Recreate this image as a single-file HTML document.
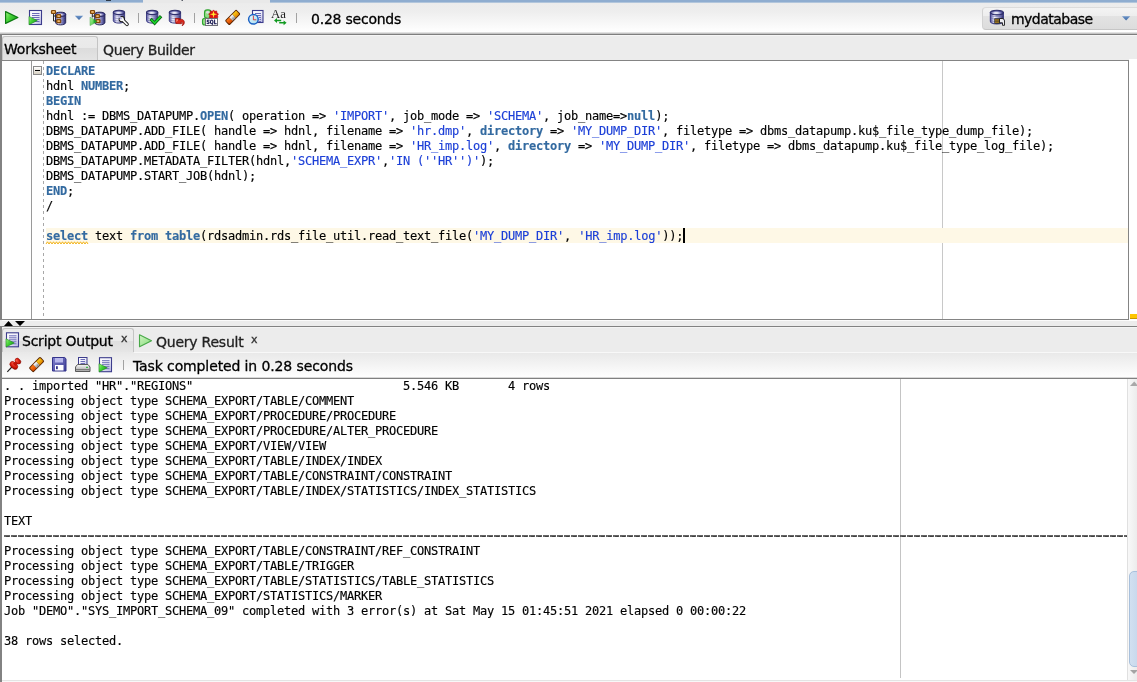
<!DOCTYPE html>
<html>
<head>
<meta charset="utf-8">
<title>SQL Worksheet</title>
<style>
html,body{margin:0;padding:0;}
body{width:1137px;height:682px;position:relative;overflow:hidden;background:#ececec;font-family:"DejaVu Sans","Liberation Sans",sans-serif;color:#000;}
.abs{position:absolute;}
.ui,.code{will-change:transform;-webkit-font-smoothing:antialiased;}
#topstrip{left:0;top:0;width:1137px;height:3px;background:linear-gradient(#8fadd0 0,#8fadd0 2px,#b2c6dc 2px,#b2c6dc 3px);}
#topstrip .gap{position:absolute;top:0;height:3px;background:#e9e9e9;left:143px;width:127px;}
#toolbar{left:0;top:3px;width:1137px;height:29px;background:linear-gradient(#ececec 0%,#eeeeee 30%,#ffffff 100%);}
#tbline1{left:0;top:32px;width:1137px;height:2px;background:linear-gradient(#e2e2e2 50%,#c4c4c4 50%);}
#tbline2{left:0;top:34px;width:1137px;height:1px;background:#7e7e7e;}
.ui{-webkit-text-stroke:0.3px currentColor;font-size:14px;white-space:pre;line-height:16px;letter-spacing:-0.23px;}
#secs{left:311px;top:11px;}
#combo{left:982px;top:7px;width:170px;height:23px;border:1px solid #d2d2d2;border-top-color:#dcdcdc;border-bottom-color:#c6c6c6;border-radius:4px;background:linear-gradient(#f3f3f3 0%,#eeeeee 36%,#e3e3e3 38%,#dcdcdc 100%);box-sizing:border-box;}
#combotxt{left:1011px;top:11px;letter-spacing:-0.53px;}
#leftborder{left:0;top:34px;width:2px;height:286px;background:#828282;}
#leftborder2{left:0;top:327px;width:2px;height:355px;background:#828282;}
#tabrow{left:2px;top:35px;width:1135px;height:25px;background:#ececec;border-top:1px solid #f6f6f6;box-sizing:border-box;}
#wtab{left:2px;top:36px;width:96px;height:24px;border:1px solid #c4c4c4;border-bottom:none;border-radius:3px 3px 0 0;box-sizing:border-box;background:linear-gradient(#ebebeb 0%,#e9e9e9 50%,#dcdcdc 50%,#e4e4e4 100%);}
#wtxt{left:4px;top:41px;}
#qbtxt{left:103px;top:42px;color:#222;letter-spacing:-0.38px;}
#editor{left:2px;top:60px;width:1127px;height:260px;background:#fff;border-top:1px solid #848484;border-right:1px solid #848484;border-bottom:1px solid #848484;box-sizing:border-box;}
#ovr{left:1129px;top:59px;width:8px;height:262px;background:#fff;}
#ovmark{left:1130px;top:314px;width:7px;height:5px;background:linear-gradient(#fec600 80%,#c89600 80%);}
#edhl{left:2px;top:320px;width:1127px;height:1px;background:#fbfbfb;}
#gutline{left:31px;top:61px;width:1px;height:258px;background:#9a9a9a;}
#foldline{left:43px;top:61px;width:1px;height:258px;background:repeating-linear-gradient(#a8a8a8 0,#a8a8a8 3px,#fff 3px,#fff 6px);}
#margin{left:942px;top:61px;width:1px;height:258px;background:#c8c8c8;}
#curline{left:46px;top:228px;width:1082px;height:15px;background:#fef8e6;}
.code{-webkit-text-stroke:0.15px currentColor;font-family:"DejaVu Sans Mono","Liberation Mono",monospace;font-size:12px;letter-spacing:-0.2246px;line-height:15px;white-space:pre;color:#000;}
#code{left:46px;top:64px;}
.k{color:#336aa0;font-weight:bold;}
.s{color:#1c3fd7;}
#caret{left:683px;top:228px;width:2px;height:15px;background:#000;}
#foldbox{left:33px;top:66px;width:9px;height:9px;border:1px solid #8a8a8a;box-sizing:border-box;background:linear-gradient(#fff,#d8d2c4);}
#foldbox i{position:absolute;left:1px;top:3px;width:5px;height:1px;background:#000;}
#split{left:0;top:321px;width:1137px;height:5px;background:#ececec;}
#split2{left:0;top:326px;width:1137px;height:1px;background:#828282;}
#split3{left:2px;top:327px;width:1135px;height:1px;background:#f4f4f4;}
#ltabrow{left:2px;top:328px;width:1135px;height:25px;background:#ececec;}
#sotab{left:2px;top:328px;width:132px;height:24px;border:1px solid #c4c4c4;border-bottom:none;border-radius:3px 3px 0 0;box-sizing:border-box;background:linear-gradient(#ececec 0%,#eaeaea 50%,#dedede 50%,#e6e6e6 100%);}
#sotxt{left:22px;top:333px;}
#sox{left:121px;top:331px;font-size:11px;color:#333;}
#qrtxt{left:156px;top:334px;color:#222;}
#qrx{left:251px;top:332px;font-size:11px;color:#333;}
#ltool{left:2px;top:352px;width:1135px;height:26px;background:linear-gradient(#e8e8e8,#ffffff);}
#lthl{left:134px;top:352px;width:1003px;height:1px;background:#f8f8f8;}
#ltline{left:2px;top:377px;width:1135px;height:2px;background:linear-gradient(#d8d8d8 50%,#808080 50%);}
#tasktxt{left:133px;top:358px;letter-spacing:-0.12px;}
#out{left:2px;top:379px;width:1125px;height:301px;background:#fff;}
#omargin{left:900px;top:379px;width:1px;height:299px;background:#c4c4c4;}
#otext{left:4px;top:379px;width:1123px;overflow:hidden;}
#dash{left:4px;top:535px;width:1123px;height:2px;background:repeating-linear-gradient(90deg,#4a4a4a 0,#4a4a4a 6px,#fff 6px,#fff 7px);opacity:0.85;}
#sbar{left:1127px;top:379px;width:10px;height:301px;background:linear-gradient(90deg,#f8f8f8,#ececec);border-left:1px solid #e0e0e0;box-sizing:border-box;}
#thumb{left:1129px;top:571px;width:14px;height:96px;border-radius:5px;border:1px solid #a8c0dc;box-sizing:border-box;background:linear-gradient(90deg,#d2e0f0,#c2d4ea);}
#botline{left:2px;top:680px;width:1135px;height:1px;background:#e4e4e4;}
#bot{left:2px;top:681px;width:1135px;height:1px;background:#f8f8f8;}
</style>
</head>
<body>
<div class="abs" id="topstrip"><div class="gap"></div></div>
<div class="abs" id="toolbar"></div>
<div class="abs" id="tbline1"></div>
<div class="abs" id="tbline2"></div>
<div class="abs ui" id="secs">0.28 seconds</div>
<div class="abs" id="combo"></div>
<div class="abs ui" id="combotxt">mydatabase</div>

<div class="abs" id="tabrow"></div>
<div class="abs" id="wtab"></div>
<div class="abs ui" id="wtxt">Worksheet</div>
<div class="abs ui" id="qbtxt">Query Builder</div>

<div class="abs" id="editor"></div>
<div class="abs" id="ovr"></div>
<div class="abs" id="ovmark"></div>
<div class="abs" id="edhl"></div>
<div class="abs" id="gutline"></div>
<div class="abs" id="foldline"></div>
<div class="abs" id="margin"></div>
<div class="abs" id="curline"></div>
<div class="abs" id="foldbox"><i></i></div>
<div class="abs code" id="code"><span class="k">DECLARE</span>
hdnl <span class="k">NUMBER</span>;
<span class="k">BEGIN</span>
hdnl := DBMS_DATAPUMP.<span class="k">OPEN</span>( operation =&gt; <span class="s">'IMPORT'</span>, job_mode =&gt; <span class="s">'SCHEMA'</span>, job_name=&gt;<span class="k">null</span>);
DBMS_DATAPUMP.ADD_FILE( handle =&gt; hdnl, filename =&gt; <span class="s">'hr.dmp'</span>, <span class="k">directory</span> =&gt; <span class="s">'MY_DUMP_DIR'</span>, filetype =&gt; dbms_datapump.ku$_file_type_dump_file);
DBMS_DATAPUMP.ADD_FILE( handle =&gt; hdnl, filename =&gt; <span class="s">'HR_imp.log'</span>, <span class="k">directory</span> =&gt; <span class="s">'MY_DUMP_DIR'</span>, filetype =&gt; dbms_datapump.ku$_file_type_log_file);
DBMS_DATAPUMP.METADATA_FILTER(hdnl,<span class="s">'SCHEMA_EXPR'</span>,<span class="s">'IN (''HR'')'</span>);
DBMS_DATAPUMP.START_JOB(hdnl);
<span class="k">END</span>;
/

<span class="k">select</span> text <span class="k">from</span> <span class="k">table</span>(rdsadmin.rds_file_util.read_text_file(<span class="s">'MY_DUMP_DIR'</span>, <span class="s">'HR_imp.log'</span>));</div>
<div class="abs" id="caret"></div>

<div class="abs" id="split"></div>
<div class="abs" id="split2"></div>
<div class="abs" id="split3"></div>
<div class="abs" id="ltabrow"></div>
<div class="abs" id="sotab"></div>
<div class="abs ui" id="sotxt">Script Output</div>
<div class="abs ui" id="sox">x</div>
<div class="abs ui" id="qrtxt">Query Result</div>
<div class="abs ui" id="qrx">x</div>
<div class="abs" id="ltool"></div>
<div class="abs" id="lthl"></div>
<div class="abs" id="ltline"></div>
<div class="abs ui" id="tasktxt">Task completed in 0.28 seconds</div>

<div class="abs" id="out"></div>
<div class="abs" id="omargin"></div>
<div class="abs code" id="otext">. . imported "HR"."REGIONS"                              5.546 KB       4 rows
Processing object type SCHEMA_EXPORT/TABLE/COMMENT
Processing object type SCHEMA_EXPORT/PROCEDURE/PROCEDURE
Processing object type SCHEMA_EXPORT/PROCEDURE/ALTER_PROCEDURE
Processing object type SCHEMA_EXPORT/VIEW/VIEW
Processing object type SCHEMA_EXPORT/TABLE/INDEX/INDEX
Processing object type SCHEMA_EXPORT/TABLE/CONSTRAINT/CONSTRAINT
Processing object type SCHEMA_EXPORT/TABLE/INDEX/STATISTICS/INDEX_STATISTICS

TEXT
-----------------------------------------------------------------------------------------------------------------------------------------------------------------
Processing object type SCHEMA_EXPORT/TABLE/CONSTRAINT/REF_CONSTRAINT
Processing object type SCHEMA_EXPORT/TABLE/TRIGGER
Processing object type SCHEMA_EXPORT/TABLE/STATISTICS/TABLE_STATISTICS
Processing object type SCHEMA_EXPORT/STATISTICS/MARKER
Job "DEMO"."SYS_IMPORT_SCHEMA_09" completed with 3 error(s) at Sat May 15 01:45:51 2021 elapsed 0 00:00:22

38 rows selected.</div>
<div class="abs" id="dash"></div>
<div class="abs" id="sbar"></div>
<div class="abs" id="thumb"></div>
<div class="abs" id="botline"></div>
<div class="abs" id="bot"></div>
<svg class="abs" id="icons" style="left:0;top:0" width="1137" height="682" viewBox="0 0 1137 682">
<defs>
<linearGradient id="gGreen" x1="0" y1="0" x2="1" y2="0.600"><stop offset="0" stop-color="#a0f484"/><stop offset="0.45" stop-color="#48d438"/><stop offset="1" stop-color="#18a01c"/></linearGradient>
<linearGradient id="gGreenL" x1="0" y1="0" x2="1" y2="1"><stop offset="0" stop-color="#d0f4c4"/><stop offset="1" stop-color="#86dc78"/></linearGradient>
<linearGradient id="gPage" x1="0" y1="0" x2="1" y2="1"><stop offset="0" stop-color="#ffffff"/><stop offset="0.5" stop-color="#f0f0fa"/><stop offset="1" stop-color="#b4b4e0"/></linearGradient>
<linearGradient id="gCyl" x1="0" y1="0" x2="1" y2="0"><stop offset="0" stop-color="#4c4c98"/><stop offset="0.14" stop-color="#9c9ccc"/><stop offset="0.32" stop-color="#f6f6fc"/><stop offset="0.52" stop-color="#c4c4e0"/><stop offset="0.78" stop-color="#7070b0"/><stop offset="1" stop-color="#28285c"/></linearGradient>
<linearGradient id="gCylD" x1="0" y1="0" x2="1" y2="0"><stop offset="0" stop-color="#6c6cac"/><stop offset="0.3" stop-color="#e0e0f0"/><stop offset="0.55" stop-color="#a4a4d0"/><stop offset="0.8" stop-color="#5c5ca0"/><stop offset="1" stop-color="#1c1c4c"/></linearGradient>
<radialGradient id="gCylTop" cx="0.45" cy="0.6" r="0.55"><stop offset="0" stop-color="#ffffff"/><stop offset="0.3" stop-color="#d8d8ec"/><stop offset="0.75" stop-color="#5c5ca4"/><stop offset="1" stop-color="#34347c"/></radialGradient>
<linearGradient id="gBlueArr" x1="0" y1="0" x2="0" y2="1"><stop offset="0" stop-color="#6c94c8"/><stop offset="1" stop-color="#3c68a4"/></linearGradient>
<linearGradient id="gClock" x1="0" y1="0" x2="1" y2="1"><stop offset="0" stop-color="#e8f8fc"/><stop offset="1" stop-color="#a4dcf0"/></linearGradient>
<linearGradient id="gSave" x1="0" y1="0" x2="1" y2="1"><stop offset="0" stop-color="#8080cc"/><stop offset="1" stop-color="#3c3c94"/></linearGradient>
<linearGradient id="gPrn" x1="0" y1="0" x2="0" y2="1"><stop offset="0" stop-color="#f8f8f8"/><stop offset="1" stop-color="#a0a0a0"/></linearGradient>
<linearGradient id="gErA" x1="0" y1="0" x2="0" y2="1"><stop offset="0" stop-color="#ff7c18"/><stop offset="1" stop-color="#d84800"/></linearGradient>
<linearGradient id="gErB" x1="0" y1="0" x2="0" y2="1"><stop offset="0" stop-color="#ffffff"/><stop offset="1" stop-color="#a8a8a8"/></linearGradient>
<linearGradient id="gErC" x1="0" y1="0" x2="0" y2="1"><stop offset="0" stop-color="#ffd018"/><stop offset="1" stop-color="#e08400"/></linearGradient>
<radialGradient id="gPin" cx="0.35" cy="0.3" r="0.8"><stop offset="0" stop-color="#ff5a4a"/><stop offset="0.6" stop-color="#d01808"/><stop offset="1" stop-color="#8c0800"/></radialGradient>
<g id="cylS"><path d="M0.500 2.500v8.300c0 1.300 2.300 2.400 5.100 2.400s5.100-1.100 5.100-2.400v-8.300z" fill="url(#gCylD)" stroke="#26265e" stroke-width="1"/><path d="M1 5.300c1.600 1.200 7.600 1.200 9.200 0M1 7.700c1.600 1.200 7.600 1.200 9.200 0M1 10.100c1.600 1.200 7.600 1.200 9.200 0" fill="none" stroke="#5858a0" stroke-width="0.800" opacity="0.500"/><ellipse cx="5.600" cy="2.600" rx="5.100" ry="2.100" fill="url(#gCylTop)" stroke="#26265e" stroke-width="1"/></g>
<g id="cylB"><path d="M0.500 2.600v8.300c0 1.400 2.500 2.400 5.600 2.400s5.700-1 5.700-2.400v-8.300z" fill="url(#gCyl)" stroke="#3c3c84" stroke-width="1"/><path d="M1 5.400c1.800 1.300 8.500 1.300 10.300 0M1 7.800c1.800 1.300 8.500 1.300 10.300 0M1 10.200c1.800 1.300 8.500 1.300 10.300 0" fill="none" stroke="#6464a8" stroke-width="0.900" opacity="0.550"/><ellipse cx="6.150" cy="2.600" rx="5.650" ry="2.200" fill="url(#gCylTop)" stroke="#30306c" stroke-width="1.100"/></g>
<g id="obox"><rect x="0.500" y="0.500" width="4" height="3" rx="0.700" fill="#d08c2c" stroke="#80480a" stroke-width="1.200"/><rect x="1.500" y="1.400" width="2" height="1.100" fill="#f8d0a0"/></g>
<g id="runscript"><rect x="0.500" y="0.500" width="12" height="14" fill="url(#gPage)" stroke="#3c3c8c" stroke-width="1.100"/><path d="M3 3.500h7.500M3 5.500h7.500M3 7.500h7.500M3 9.500h7.500M3 11.500h7.500" stroke="#6c6cb8" stroke-width="1"/><path d="M0 6.500v8.200l8.300-4.100z" fill="url(#gGreen)" stroke="#1c8c1c" stroke-width="0.600"/></g>
<g id="eraser"><g transform="rotate(-45)"><rect x="-8.100" y="-3.300" width="16.200" height="6.600" rx="1.500" fill="#5c2600"/><path d="M-7.200 -1.200c0-0.800 0.400-1.200 1.200-1.200h3.600v4.800h-3.600c-0.800 0-1.200-0.400-1.200-1.200z" fill="url(#gErA)"/><rect x="-2.400" y="-2.400" width="4.400" height="4.800" fill="url(#gErB)"/><path d="M2 -2.400h4c0.800 0 1.200 0.400 1.200 1.200v2.400c0 0.800-0.400 1.200-1.200 1.200h-4z" fill="url(#gErC)"/><path d="M-1 0.300v2.100M0 0.300v2.100M1 0.300v2.100" stroke="#707070" stroke-width="0.500"/></g></g>
</defs>

<!-- top strip remnants of clipped tab text -->
<rect x="106" y="0" width="5" height="1" fill="#1c2430" opacity="0.850"/>
<rect x="181.500" y="0" width="1.500" height="1" fill="#1c2430" opacity="0.700"/>

<!-- 1 run -->
<path d="M5.600 11.600v11.800l12.300-5.900z" fill="url(#gGreen)" stroke="#0c7a10" stroke-width="1.200" stroke-linejoin="round"/>
<!-- 2 run script -->
<use href="#runscript" x="29" y="10"/>
<!-- 3 explain plan -->
<use href="#cylS" x="55" y="11.700"/>
<path d="M53.500 13.500v7.500h3M53.500 16h3" fill="none" stroke="#282828" stroke-width="1"/>
<use href="#obox" x="51" y="10"/><use href="#obox" x="56.200" y="14.200"/><use href="#obox" x="56.200" y="19.200"/>
<!-- 4 dropdown -->
<path d="M74.800 15.800h8.400l-4.200 4.200z" fill="url(#gBlueArr)"/>
<!-- 5 autotrace -->
<use href="#cylS" x="94.200" y="11.700"/>
<path d="M92.300 13.500v4M92.300 16.100h3" fill="none" stroke="#282828" stroke-width="1"/>
<path d="M90 17.200v8.400l7.700-4.200z" fill="url(#gGreen)" stroke="#1c8c1c" stroke-width="0.500" opacity="0.750"/>
<use href="#obox" x="90" y="10"/><use href="#obox" x="95" y="14.200"/><use href="#obox" x="95.500" y="19.200"/>
<path d="M93.500 19.600l4 1.800-4 2.200z" fill="#18a828" opacity="0.800"/>
<!-- 6 sql tuning -->
<use href="#cylB" x="112.800" y="9.800"/>
<path d="M122.800 20.200l4.200 4.100" stroke="#1c1c1c" stroke-width="3.700" stroke-linecap="round" fill="none"/>
<circle cx="121.800" cy="19.200" r="3.100" fill="#1c1c1c"/>
<path d="M122.800 20.200l4.200 4.100" stroke="#f8f8f8" stroke-width="1.800" stroke-linecap="round" fill="none"/>
<circle cx="121.800" cy="19.200" r="2.100" fill="#f8f8f8"/>
<path d="M121.600 19l-2.600-2.600" stroke="#b4b4e0" stroke-width="1.900" fill="none"/>
<!-- sep -->
<rect x="138" y="13" width="1" height="10" fill="#a2a2a2"/>
<!-- 7 commit -->
<use href="#cylB" x="146" y="9.800"/>
<path d="M151.700 20.100l2.900 3 5.400-5.800" fill="none" stroke="#0a6410" stroke-width="3.300" stroke-linecap="square" stroke-linejoin="miter"/>
<path d="M151.700 20.100l2.900 3 5.400-5.800" fill="none" stroke="#1cd42c" stroke-width="1.700" stroke-linecap="square" stroke-linejoin="miter"/>
<!-- 8 rollback -->
<use href="#cylB" x="168.800" y="9.800"/>
<path d="M175.300 18.300l4.600 0.300-1.300 1.300c2.800-1.600 6.200 0 5.700 3-0.300 1.500-1.100 2.500-2.200 2.800 1.200-1.700 0.800-3.700-1.400-3.600l0.900 1.600-5.700-0.200z" fill="#d8281c" stroke="#940c08" stroke-width="0.700" stroke-linejoin="round"/>
<path d="M176.300 19.400l2 0.200-1.700 2.600z" fill="#ff9a80"/>
<!-- sep -->
<rect x="194" y="13" width="1" height="10" fill="#a2a2a2"/>
<!-- 9 sql worksheet -->
<path d="M204.500 12.500c0-1.500 1.200-2.600 2.700-2.600h1.200c1.500 0 2.600 1.100 2.600 2.600v3.200c0 1.500-1.100 2.600-2.600 2.600h-1.200c-1.500 0-2.700-1.100-2.700-2.600z" fill="#90dc84" stroke="#30a430" stroke-width="1.100"/>
<path d="M202.500 20.500c0-1.300 1-2.300 2.300-2.300h1.700v6.800h-1.700c-1.300 0-2.300-1-2.300-2.300z" fill="#90dc84" stroke="#30a430" stroke-width="1.100"/>
<ellipse cx="207.700" cy="12.300" rx="1.700" ry="1.400" fill="#dcdcdc"/>
<path d="M213.500 9.900l1.300 1.400 1.900-0.400 0.200 1.900 1.600 1.100-1 1.600 0.500 1.900-1.800 0.600-0.700 1.800-1.900-0.600-1.900 0.600-0.700-1.800-1.800-0.600 0.500-1.900-1-1.600 1.600-1.100 0.200-1.900 1.900 0.400z" fill="#dc1414" stroke="#b40808" stroke-width="0.500"/>
<path d="M213.500 10.700l0.800 2.800 2.900 0.800-2.900 0.800-0.800 2.800-0.800-2.800-2.900-0.800 2.900-0.800z" fill="#ffe830"/>
<rect x="205.500" y="18.500" width="12" height="7" fill="#ffffff" stroke="#707078" stroke-width="1"/>
<text x="206.600" y="24" font-family="'DejaVu Sans','Liberation Sans',sans-serif" font-weight="bold" font-size="5.800" fill="#0c0c48" stroke="#0c0c48" stroke-width="0.250" textLength="10" lengthAdjust="spacingAndGlyphs">SQL</text>
<!-- 10 eraser -->
<use href="#eraser" x="232.700" y="17.400"/>
<!-- 11 history -->
<rect x="252.500" y="10.500" width="10.500" height="12" fill="url(#gPage)" stroke="#3c3c8c" stroke-width="1.100"/>
<path d="M255 13.500h6M257 15.500h4M259 17.500h2M259.500 19.500h1.500M258.500 21.500h2.500" stroke="#6c6cb8" stroke-width="1"/>
<circle cx="253.400" cy="19.300" r="4.800" fill="url(#gClock)" stroke="#1c62c4" stroke-width="1.500"/>
<path d="M253.400 15.600v4.200h2.900" fill="none" stroke="#d41c1c" stroke-width="0.800"/>
<!-- 12 Aa -->
<text x="271" y="18.300" font-family="'Liberation Serif','DejaVu Serif',serif" font-size="12.500" fill="#1c1c1c" textLength="15" lengthAdjust="spacingAndGlyphs">Aa</text>
<path d="M274 20.500l3-2.400v1.600h4.200v1.600h-4.200v1.600z" fill="#109a20"/>
<path d="M286.600 22.800l-3 2.400v-1.600h-4.400v-1.600h4.400v-1.600z" fill="#109a20"/>
<!-- sep -->
<rect x="296" y="13" width="1" height="10" fill="#a2a2a2"/>

<!-- combo db icon -->
<g transform="translate(989.800,9.800) scale(1.150,1.060)"><use href="#cylB"/></g>
<rect x="994.300" y="18.300" width="5.400" height="5.400" fill="#242424"/>
<path d="M995 20h4.200M995 22.100h4.200" stroke="#ffb824" stroke-width="0.900"/>
<path d="M999.500 18.500h2.500c1.500 0 2.500 1 2.500 2.500v4.300h-2v-2.500h-3z" fill="#ececf0" stroke="#181818" stroke-width="0.900"/>
<path d="M1122 16.300h8.200l-4.100 4.200z" fill="url(#gBlueArr)"/>

<!-- squiggle -->
<path d="M46 244l1.500 -2.200l1.500 2.200l1.500 -2.200l1.500 2.200l1.500 -2.200l1.500 2.200l1.500 -2.200l1.500 2.200l1.500 -2.200l1.500 2.200l1.500 -2.200l1.500 2.200l1.500 -2.200l1.500 2.200l1.500 -2.200l1.500 2.200l1.500 -2.200l1.500 2.200l1.500 -2.200l1.500 2.200l1.500 -2.200l1.500 2.200l1.500 -2.200l1.500 2.200l1.500 -2.200l1.500 2.200l1.500 -2.200l1.500 2.200" fill="none" stroke="#f0ac00" stroke-width="0.900"/>

<!-- splitter arrows -->
<path d="M4 326l4.500-5 4.500 5zM15 321h10l-5 5z" fill="#000"/>

<!-- script output tab icon -->
<use href="#runscript" x="6" y="332.300"/>
<!-- query result icon -->
<path d="M139.500 334.800v12l12-6z" fill="url(#gGreenL)" stroke="#48a848" stroke-width="1.100" stroke-linejoin="round"/>

<!-- lower toolbar -->
<path d="M7.300 371.800l5-5.300" stroke="#202020" stroke-width="1.100" fill="none"/>
<g transform="rotate(-45 14.500 364)"><ellipse cx="13" cy="364.500" rx="4.600" ry="3" fill="url(#gPin)" stroke="#900c04" stroke-width="0.500" transform="rotate(90 13 364.500)"/><rect x="13.500" y="362.600" width="4" height="3.600" fill="#c41408"/><ellipse cx="19" cy="364.400" rx="2.300" ry="3.300" fill="url(#gPin)" stroke="#900c04" stroke-width="0.500"/></g>
<use href="#eraser" x="36.600" y="364.600"/>
<path d="M52.500 357.500h12.200l1.300 1.300v12.200h-13.500z" fill="url(#gSave)" stroke="#34348c" stroke-width="1"/>
<rect x="55" y="358" width="8" height="4.500" fill="#b8b8ec"/>
<rect x="55" y="365" width="8.500" height="5.500" fill="#ffffff"/>
<rect x="56" y="366.200" width="1.800" height="3" fill="#34348c"/>
<rect x="78.500" y="357.500" width="8.500" height="8" fill="url(#gPage)" stroke="#3c3c8c" stroke-width="1"/>
<path d="M80.500 359.500h4.500M80.500 361.500h4.500M80.500 363.500h4.500" stroke="#6c6cb8" stroke-width="1"/>
<path d="M77.500 364.500l-2 2.500v4.500h14.500v-4.500l-2-2.500z" fill="url(#gPrn)" stroke="#5a5a5a" stroke-width="1"/>
<path d="M76 369.500h13.500" stroke="#6a6a6a" stroke-width="0.800"/>
<rect x="86" y="366.800" width="2" height="1" fill="#18b028"/>
<use href="#runscript" x="99" y="357.200"/>
<rect x="123" y="360" width="1" height="10" fill="#a2a2a2"/>

<!-- scrollbar arrows -->
<path d="M1130 386l4.200-4.500 4.200 4.500z" fill="#a8a8a8"/>
<path d="M1130 670h8l-4 4z" fill="#a4a4a4"/>
</svg>
<div class="abs" id="leftborder"></div>
<div class="abs" id="leftborder2"></div>
</body>
</html>
